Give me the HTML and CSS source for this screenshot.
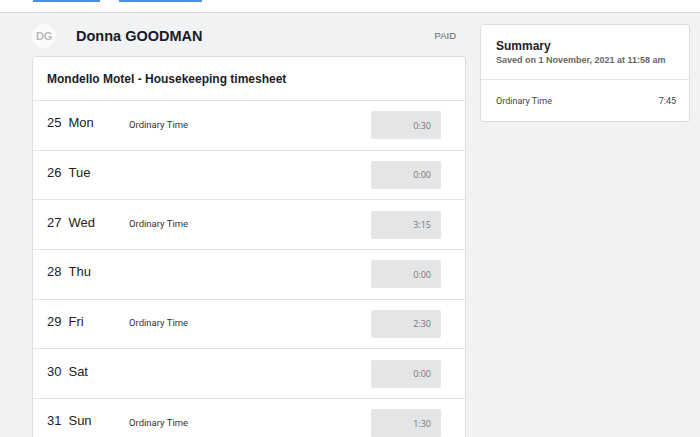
FILE: index.html
```html
<!DOCTYPE html>
<html>
<head>
<meta charset="utf-8">
<link rel="stylesheet" href="styles.css">
</head>
<body>
<div class="topbar">
  <span class="tab tab-a"></span>
  <span class="tab tab-b"></span>
</div>
<div class="main">
  <div class="left">
    <div class="person">
      <div class="avatar">DG</div>
      <div class="name">Donna GOODMAN</div>
      <div class="status">PAID</div>
    </div>
    <div class="card">
      <div class="card-head">Mondello Motel - Housekeeping timesheet</div>
      <div class="row"><div class="day"><span class="num">25</span>Mon</div><div class="type">Ordinary Time</div><div class="time">0:30</div></div>
      <div class="row"><div class="day"><span class="num">26</span>Tue</div><div class="type"></div><div class="time">0:00</div></div>
      <div class="row"><div class="day"><span class="num">27</span>Wed</div><div class="type">Ordinary Time</div><div class="time">3:15</div></div>
      <div class="row"><div class="day"><span class="num">28</span>Thu</div><div class="type"></div><div class="time">0:00</div></div>
      <div class="row"><div class="day"><span class="num">29</span>Fri</div><div class="type">Ordinary Time</div><div class="time">2:30</div></div>
      <div class="row"><div class="day"><span class="num">30</span>Sat</div><div class="type"></div><div class="time">0:00</div></div>
      <div class="row"><div class="day"><span class="num">31</span>Sun</div><div class="type">Ordinary Time</div><div class="time">1:30</div></div>
    </div>
  </div>
  <div class="right">
    <div class="summary">
      <div class="sum-head">
        <div class="sum-title">Summary</div>
        <div class="sum-sub">Saved on 1 November, 2021 at 11:58 am</div>
      </div>
      <div class="sum-row"><span>Ordinary Time</span><span>7:45</span></div>
    </div>
  </div>
</div>
</body>
</html>
```
FILE: styles.css
```css
html, body {
  margin: 0;
  padding: 0;
}
body {
  background: #f1f2f4;
  font-family: "Liberation Sans", Arial, sans-serif;
  color: #1d1f2b;
  height: 437px;
  overflow: hidden;
}
.topbar {
  height: 12px;
  background: #ffffff;
  border-bottom: 1px solid #d9dadd;
  display: flex;
  align-items: flex-start;
  padding-left: 33px;
  gap: 19px;
}
.tab {
  display: block;
  height: 2px;
  background: #4a8fe6;
}
.tab-a { width: 67px; }
.tab-b { width: 83px; }
.main {
  display: flex;
  gap: 14px;
  padding: 11px 0 0 32px;
}
.left {
  width: 434px;
}
.person {
  display: flex;
  align-items: center;
  height: 24px;
  margin-bottom: 8px;
}
.avatar {
  width: 24px;
  height: 24px;
  border-radius: 50%;
  background: #fbfbfc;
  color: #b9bbc0;
  font-size: 11px;
  font-weight: bold;
  display: flex;
  align-items: center;
  justify-content: center;
  letter-spacing: -0.3px;
}
.name {
  margin-left: 20px;
  font-size: 14.5px;
  font-weight: bold;
  color: #171a2b;
  flex: 1;
}
.status {
  font-size: 9.5px;
  color: #666;
  margin-right: 10px;
  margin-top: -2px;
}
.card {
  background: #fff;
  border: 1px solid #dcdde0;
  border-radius: 3px;
}
.card-head {
  height: 43px;
  display: flex;
  align-items: center;
  padding-left: 14px;
  font-size: 12px;
  font-weight: bold;
  color: #1b1d2a;
  border-bottom: 1px solid #e2e3e6;
}
.row {
  height: 48.67px;
  display: flex;
  align-items: center;
  padding-left: 14px;
  border-bottom: 1px solid #e2e3e6;
}
.day {
  width: 82px;
  font-size: 13px;
  color: #222;
  margin-top: -5px;
}
.num {
  margin-right: 7px;
}
.type {
  flex: 1;
  font-size: 9.5px;
  color: #333;
  font-family: Roboto, "Liberation Sans", sans-serif;
  margin-top: -2px;
}
.time {
  width: 60px;
  height: 28px;
  margin-right: 24px;
  background: #e4e5e7;
  border-radius: 2px;
  display: flex;
  align-items: center;
  justify-content: flex-end;
  padding-right: 10px;
  font-size: 9px;
  color: #777;
  font-family: "Open Sans", "Liberation Sans", sans-serif;
}
.right {
  width: 210px;
}
.summary {
  background: #fff;
  border: 1px solid #dcdde0;
  border-radius: 3px;
}
.sum-head {
  height: 54px;
  padding-left: 15px;
  border-bottom: 1px solid #e2e3e6;
  display: flex;
  flex-direction: column;
  justify-content: center;
}
.sum-title {
  font-size: 12px;
  font-weight: bold;
  color: #1b1d2a;
}
.sum-sub {
  font-size: 9px;
  font-weight: bold;
  color: #666;
  margin-top: 2px;
}
.sum-row {
  height: 41px;
  display: flex;
  align-items: center;
  justify-content: space-between;
  padding: 0 13px 0 15px;
  font-size: 9px;
  color: #444;
  font-family: Roboto, "Liberation Sans", sans-serif;
}
```
